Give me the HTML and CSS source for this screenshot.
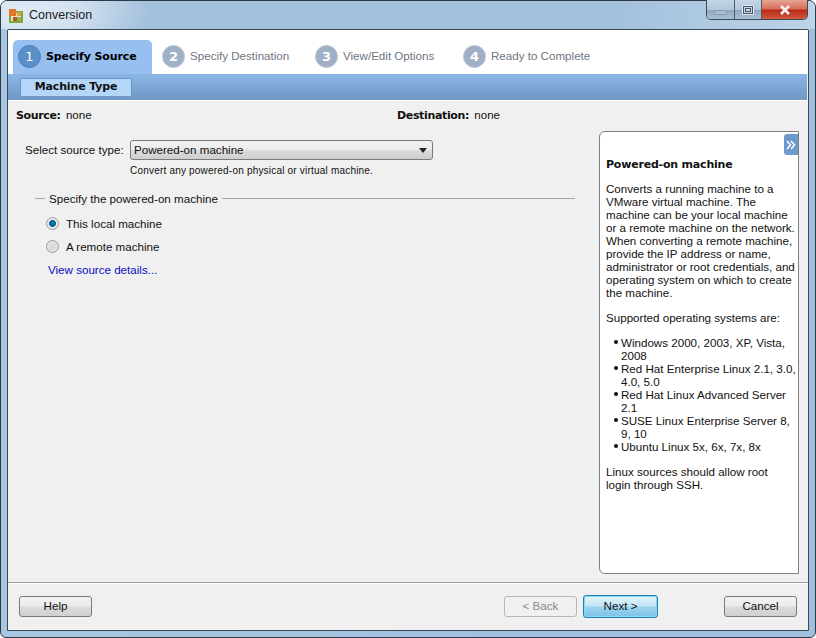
FILE: index.html
```html
<!DOCTYPE html>
<html lang="en">
<head>
<meta charset="utf-8">
<title>Conversion</title>
<link rel="stylesheet" href="styles.css">
</head>
<body>
<div class="window">
  <header class="titlebar">
    <svg class="app-icon" width="16" height="16" viewBox="0 0 16 16">
      <rect x="1" y="3" width="14" height="12" fill="#7fa83c"/>
      <rect x="3" y="5" width="10" height="8" fill="#e9e4c8"/>
      <rect x="1" y="1" width="7" height="7" fill="#e2762a"/>
      <rect x="9" y="4" width="4" height="4" fill="#d9a53a"/>
      <rect x="5" y="9" width="4" height="4" fill="#b5562a"/>
      <rect x="9" y="9" width="4" height="4" fill="#8fb24a"/>
    </svg>
    <span class="title">Conversion</span>
    <div class="controls">
      <div class="ctl ctl-min"><span class="min-glyph"></span></div>
      <div class="ctl ctl-max"><span class="max-glyph"></span></div>
      <div class="ctl ctl-close">
        <svg width="12" height="10" viewBox="0 0 12 10"><path d="M2 1 L10 9 M10 1 L2 9" stroke="#f4f0ee" stroke-width="2.6" fill="none"/></svg>
      </div>
    </div>
  </header>

  <main class="client">
    <nav class="steps">
      <div class="step step-active"><span class="num num-active">1</span><span class="step-label">Specify Source</span></div>
      <div class="step step-2"><span class="num">2</span><span class="step-label">Specify Destination</span></div>
      <div class="step step-3"><span class="num">3</span><span class="step-label">View/Edit Options</span></div>
      <div class="step step-4"><span class="num">4</span><span class="step-label">Ready to Complete</span></div>
    </nav>
    <div class="band"><div class="subtab">Machine Type</div></div>

    <div class="body">
      <div class="summary">
        <div class="sum-source"><b>Source:</b> none</div>
        <div class="sum-dest"><b>Destination:</b> none</div>
      </div>
      <div class="work">
        <section class="form">
          <div class="source-row">
            <label class="source-label">Select source type:</label>
            <div class="select"><span class="select-value">Powered-on machine</span><span class="arrow"></span></div>
          </div>
          <p class="hint">Convert any powered-on physical or virtual machine.</p>
          <div class="group-head"><span class="rule-short"></span><span>Specify the powered-on machine</span><span class="rule-long"></span></div>
          <div class="radios">
            <div class="radio-row"><span class="radio radio-on"></span><span>This local machine</span></div>
            <div class="radio-row"><span class="radio"></span><span>A remote machine</span></div>
          </div>
          <a class="link" href="#">View source details...</a>
        </section>
        <aside class="help">
          <div class="collapse">
            <svg width="10" height="10" viewBox="0 0 10 10"><path d="M1 1 L4.5 5 L1 9 M5 1 L8.5 5 L5 9" stroke="#fff" stroke-width="1.5" fill="none"/></svg>
          </div>
          <h2>Powered-on machine</h2>
          <p>Converts a running machine to a<br>VMware virtual machine. The<br>machine can be your local machine<br>or a remote machine on the network.<br>When converting a remote machine,<br>provide the IP address or name,<br>administrator or root credentials, and<br>operating system on which to create<br>the machine.</p>
          <p>Supported operating systems are:</p>
          <ul>
            <li>Windows 2000, 2003, XP, Vista,<br>2008</li>
            <li>Red Hat Enterprise Linux 2.1, 3.0,<br>4.0, 5.0</li>
            <li>Red Hat Linux Advanced Server<br>2.1</li>
            <li>SUSE Linux Enterprise Server 8,<br>9, 10</li>
            <li>Ubuntu Linux 5x, 6x, 7x, 8x</li>
          </ul>
          <p>Linux sources should allow root<br>login through SSH.</p>
        </aside>
      </div>
      <footer class="footer">
        <button class="btn">Help</button>
        <div class="nav-btns">
          <button class="btn btn-disabled">&lt; Back</button>
          <button class="btn btn-default">Next &gt;</button>
        </div>
        <button class="btn">Cancel</button>
      </footer>
    </div>
  </main>
</div>
</body>
</html>
```

FILE: styles.css
```css
* { box-sizing: border-box; }
html, body { margin: 0; padding: 0; }
body {
  width: 816px;
  height: 638px;
  overflow: hidden;
  background: #fff;
  font-family: "Liberation Sans", sans-serif;
  font-size: 11.6px;
  color: #111;
}
b, .subtab, .help h2, .step-active { font-family: "DejaVu Sans", sans-serif; font-size: 11px; }
.window {
  width: 816px;
  height: 638px;
  border: 1px solid #2c3a48;
  border-radius: 7px 7px 6px 6px;
  background: linear-gradient(90deg, #a9c6e2 0%, #a0bfdc 100%);
  display: flex;
  flex-direction: column;
  padding: 0 6px 6px;
}
.titlebar {
  height: 28px;
  flex: none;
  display: flex;
  align-items: center;
  position: relative;
  margin: 0 -6px;
  padding: 1px 0 0 7px;
  border-radius: 6px 6px 0 0;
  background: radial-gradient(ellipse 130px 50px at 20px 10px, #dfeaf5 0%, #d2e1f0 45%, rgba(165,193,220,0) 100%), linear-gradient(90deg, #a3c0dc 0%, #a3c0dc 75%, #bcd3e8 100%);
}
.app-icon { flex: none; }
.title { margin: 0 0 2px 5px; font-size: 12.5px; color: #1c1c1c; }
.controls {
  position: absolute;
  top: -1px;
  right: 7px;
  width: 102px;
  height: 20px;
  display: flex;
  border: 1px solid #3d4a57;
  border-top: 0;
  border-radius: 0 0 5px 5px;
  overflow: hidden;
}
.ctl { display: flex; align-items: center; justify-content: center; border-right: 1px solid #4d5a68; }
.ctl-min { width: 28px; background: linear-gradient(180deg, #c3d6e8 0%, #b2c8dc 50%, #8fa7bc 52%, #a9c0d4 100%); }
.ctl-max { width: 27px; background: linear-gradient(180deg, #c3d6e8 0%, #b2c8dc 50%, #8fa7bc 52%, #a9c0d4 100%); }
.ctl-close { flex: 1; border-right: 0; background: linear-gradient(180deg, #e4a593 0%, #d8705a 45%, #bd2a18 55%, #cf5a40 100%); }
.min-glyph { width: 13px; height: 5px; margin-top: 5px; background: #a9bccd; border: 1px solid #8b9eb0; }
.max-glyph { width: 10px; height: 8px; border: 1px solid #4a5866; background: #c6d6e5; box-shadow: inset 0 0 0 1px #c6d6e5, inset 0 0 0 2px #4a5866, 0 0 0 1px #dce7f1; }

.client {
  flex: 1;
  min-height: 0;
  display: flex;
  flex-direction: column;
  background: #f0f0f0;
  border: 1px solid #3a4855;
  border-radius: 2px 2px 0 0;
  padding-right: 1px;
}
.steps {
  height: 44px;
  flex: none;
  background: #fff;
  display: flex;
  align-items: flex-end;
  margin-right: -1px;
  padding-left: 5px;
}
.step {
  height: 34px;
  display: flex;
  align-items: center;
  gap: 5px;
  color: #6d7480;
  flex: none;
  padding-bottom: 2px;
}
.step-label { margin-bottom: 2px; }
.step-active .step-label { margin-bottom: 0; }
.step-active {
  width: 139px;
  padding-left: 5px;
  background: #97bfef;
  border-radius: 5px 5px 0 0;
  color: #000;
  font-weight: bold;
  letter-spacing: -0.1px;
}
.step-2 { margin-left: 10px; width: 153px; }
.step-3 { width: 148px; }
.num {
  width: 23px;
  height: 23px;
  flex: none;
  border-radius: 50%;
  background: #9fb0c6;
  border: 1px solid #bcc8d6;
  color: #fff;
  font-family: "DejaVu Sans", sans-serif;
  font-size: 13px;
  font-weight: bold;
  display: flex;
  align-items: center;
  justify-content: center;
  letter-spacing: 0;
}
.num-active { background: #5a8fc8; border-color: #4d80bc; font-weight: normal; }

.band {
  height: 26px;
  flex: none;
  background: linear-gradient(180deg, #8ab6e6 0%, #7097c4 100%);
  padding: 4px 0 0 12px;
}
.subtab {
  width: 112px;
  height: 19px;
  background: #b4d6f8;
  border: 1px solid #6c97c9;
  border-radius: 2px;
  text-align: center;
  line-height: 16px;
  font-weight: bold;
  letter-spacing: -0.15px;
  color: #101010;
}
.body {
  flex: 1;
  min-height: 0;
  display: flex;
  flex-direction: column;
  border-top: 1px solid #fff;
  margin-right: -1px;
}
.summary {
  height: 30px;
  flex: none;
  display: flex;
  align-items: center;
  padding: 0 0 2px 8px;
}
.summary b { letter-spacing: -0.35px; margin-right: 2px; }
.sum-source { width: 381px; }
.work {
  flex: 1;
  min-height: 0;
  display: flex;
  justify-content: space-between;
  padding-right: 9px;
}
.form { width: 567px; padding: 9px 0 0 17px; }
.source-row { display: flex; align-items: center; height: 20px; }
.source-label { width: 105px; flex: none; white-space: nowrap; margin-bottom: 2px; }
.select {
  width: 303px;
  height: 20px;
  display: flex;
  align-items: center;
  justify-content: space-between;
  padding: 0 5px 0 3px;
  background: linear-gradient(180deg, #f2f2f2 0%, #ebebeb 48%, #dcdcdc 52%, #cfcfcf 100%);
  border: 1px solid #7b7b7b;
  border-radius: 3px;
}
.select-value { margin-bottom: 2px; }
.arrow { width: 0; height: 0; border: 4.5px solid transparent; border-top: 5px solid #222; border-bottom: 0; }
.hint { margin: 5px 0 0 105px; font-size: 10px; line-height: 11px; letter-spacing: 0.2px; }
.group-head { display: flex; align-items: center; gap: 4px; margin: 16px 0 0 10px; line-height: 13px; }
.rule-short { width: 10px; height: 1px; background: #a3a3a3; }
.rule-long { flex: 1; height: 1px; background: #a3a3a3; }
.radios { margin: 12px 0 0 21px; display: flex; flex-direction: column; gap: 10px; }
.radio-row { display: flex; align-items: center; gap: 7px; height: 13px; }
.radio {
  width: 13px;
  height: 13px;
  flex: none;
  border-radius: 50%;
  border: 1px solid #9a9a9a;
  background: radial-gradient(circle, #d4d4d4 0%, #ebebeb 100%);
}
.radio-on { background: radial-gradient(circle, #0d7fb8 0%, #0a5c8e 40%, #e9eef2 48%, #e6e6e6 100%); }
.link { display: block; margin: 10px 0 0 23px; color: #0b0bc4; text-decoration: none; line-height: 13px; }
.help {
  width: 200px;
  height: 443px;
  position: relative;
  background: #fff;
  border: 1px solid #7e7e7e;
  border-radius: 6px 0 0 6px;
  padding: 26px 0 0 6px;
  line-height: 13px;
  white-space: nowrap;
}
.collapse {
  position: absolute;
  top: 2px;
  right: 0;
  width: 14px;
  height: 21px;
  background: #6d9acb;
  border-radius: 3px 0 0 3px;
  display: flex;
  align-items: center;
  justify-content: center;
}
.help h2 { margin: 0 0 11px; line-height: 13px; font-weight: bold; letter-spacing: -0.2px; }
.help p { margin: 0 0 12px; }
.help ul { margin: 0 0 12px; padding: 0 0 0 15px; list-style: none; }
.help li { position: relative; }
.help li::before { content: ""; position: absolute; left: -7px; top: 4px; width: 4px; height: 4px; border-radius: 50%; background: #111; }
.footer {
  height: 48px;
  flex: none;
  margin-top: 9px;
  border-top: 1px solid #a0a0a0;
  box-shadow: inset 0 1px 0 #fff;
  display: flex;
  justify-content: space-between;
  align-items: center;
  padding: 0 11px;
}
.nav-btns { display: flex; align-items: center; gap: 6px; margin-left: 412px; margin-right: 66px; }
.btn {
  width: 73px;
  height: 21px;
  padding: 0 0 2px;
  font: inherit;
  color: #111;
  background: linear-gradient(180deg, #f2f2f2 0%, #ebebeb 48%, #dcdcdc 52%, #cfcfcf 100%);
  border: 1px solid #7b7b7b;
  border-radius: 3px;
}
.btn-disabled { background: #f0f0f0; border-color: #b8b8b8; color: #8a8a8a; }
.btn-default {
  width: 75px;
  height: 23px;
  background: linear-gradient(180deg, #e3f4fc 0%, #c4e5f6 48%, #9dd4ef 52%, #7cc3e8 100%);
  border: 1px solid #1f7fb4;
  box-shadow: inset 0 0 0 1px #7fdcf5;
}
```
